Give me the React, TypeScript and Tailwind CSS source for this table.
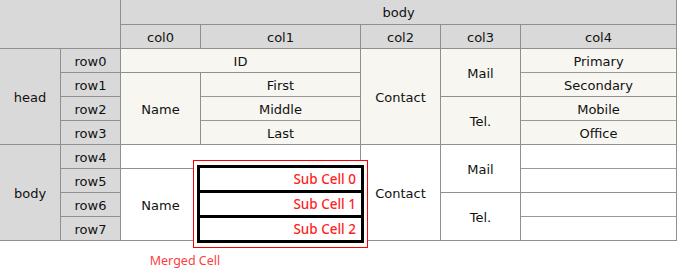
import React from "react";

const line = "border-[#8f8f8f]";
const base = "flex items-center justify-center pt-[2px]";
const hd = `bg-[#d9d9d9] border-r border-b ${line} ${base}`;
const cr = `bg-[#f7f6f1] border-r border-b ${line} ${base}`;
const cd = `bg-[#f7f6f1] border-r border-b border-b-[#999999] border-b-dotted border-r-[#8f8f8f] ${base}`;
const wh = `bg-white border-r border-b ${line} ${base}`;
const wd = `bg-white border-r border-b border-b-[#999999] border-b-dotted border-r-[#8f8f8f] ${base}`;

function SubCells() {
  return (
    <div className="absolute left-[193px] top-[160px] z-10 h-[88px] w-[175px] border border-[#ff0000] bg-white px-[3px] py-[4px]">
      <div className="flex h-full flex-col border-[3px] border-black font-['Noto_Sans',sans-serif] text-[13.5px] font-medium text-[#ff1f1f]">
        <div className="flex flex-1 items-center justify-end pr-[5px]">Sub Cell 0</div>
        <div className="flex flex-1 items-center justify-end border-t-[3px] border-black pr-[5px]">Sub Cell 1</div>
        <div className="flex flex-1 items-center justify-end border-t-[3px] border-black pr-[5px]">Sub Cell 2</div>
      </div>
    </div>
  );
}

export default function App() {
  return (
    <div className="w-[678px] h-[270px] bg-white font-['DejaVu_Sans',sans-serif] text-[13px] text-[#111]">
      <div className="relative">
        <div className="grid grid-cols-[61px_60px_80px_160px_80px_80px_156px] grid-rows-[25px_repeat(9,24px)]">
          {/* header */}
          <div className={`${hd} col-start-1 col-span-2 row-start-1 row-span-2`} />
          <div className={`${hd} col-start-3 col-span-5 row-start-1`}>body</div>
          <div className={`${hd} col-start-3 row-start-2`}>col0</div>
          <div className={`${hd} col-start-4 row-start-2`}>col1</div>
          <div className={`${hd} col-start-5 row-start-2`}>col2</div>
          <div className={`${hd} col-start-6 row-start-2`}>col3</div>
          <div className={`${hd} col-start-7 row-start-2`}>col4</div>

          {/* head section */}
          <div className={`${hd} col-start-1 row-start-3 row-span-4`}>head</div>
          <div className={`${hd} col-start-2 row-start-3`}>row0</div>
          <div className={`${hd} col-start-2 row-start-4`}>row1</div>
          <div className={`${hd} col-start-2 row-start-5`}>row2</div>
          <div className={`${hd} col-start-2 row-start-6`}>row3</div>
          <div className={`${cr} col-start-3 col-span-2 row-start-3`}>ID</div>
          <div className={`${cr} col-start-3 row-start-4 row-span-3`}>Name</div>
          <div className={`${cd} col-start-4 row-start-4`}>First</div>
          <div className={`${cd} col-start-4 row-start-5`}>Middle</div>
          <div className={`${cr} col-start-4 row-start-6`}>Last</div>
          <div className={`${cr} col-start-5 row-start-3 row-span-4`}>Contact</div>
          <div className={`${cr} col-start-6 row-start-3 row-span-2`}>Mail</div>
          <div className={`${cr} col-start-6 row-start-5 row-span-2`}>Tel.</div>
          <div className={`${cd} col-start-7 row-start-3`}>Primary</div>
          <div className={`${cr} col-start-7 row-start-4`}>Secondary</div>
          <div className={`${cd} col-start-7 row-start-5`}>Mobile</div>
          <div className={`${cr} col-start-7 row-start-6`}>Office</div>

          {/* body section */}
          <div className={`${hd} col-start-1 row-start-7 row-span-4`}>body</div>
          <div className={`${hd} col-start-2 row-start-7`}>row4</div>
          <div className={`${hd} col-start-2 row-start-8`}>row5</div>
          <div className={`${hd} col-start-2 row-start-9`}>row6</div>
          <div className={`${hd} col-start-2 row-start-10`}>row7</div>
          <div className={`${wh} col-start-3 col-span-2 row-start-7`} />
          <div className={`${wh} col-start-3 row-start-8 row-span-3`}>Name</div>
          <div className={`${wh} col-start-4 row-start-8 row-span-3`} />
          <div className={`${wh} col-start-5 row-start-7 row-span-4`}>Contact</div>
          <div className={`${wh} col-start-6 row-start-7 row-span-2`}>Mail</div>
          <div className={`${wh} col-start-6 row-start-9 row-span-2`}>Tel.</div>
          <div className={`${wd} col-start-7 row-start-7`} />
          <div className={`${wh} col-start-7 row-start-8`} />
          <div className={`${wd} col-start-7 row-start-9`} />
          <div className={`${wh} col-start-7 row-start-10`} />
        </div>
        <SubCells />
      </div>
      <div className="ml-[120px] mt-[11px] w-[130px] text-center font-['Noto_Sans',sans-serif] text-[12.5px] leading-[17px] text-[#ff4040]">
        Merged Cell
      </div>
    </div>
  );
}
